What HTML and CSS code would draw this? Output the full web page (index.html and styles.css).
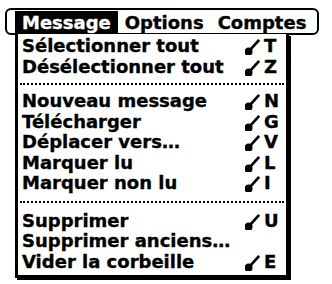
FILE: index.html
```html
<!DOCTYPE html>
<html>
<head>
<meta charset="utf-8">
<link rel="stylesheet" href="styles.css">
</head>
<body>
<div class="screen">
  <div class="menubar">
    <span class="title active">Message</span>
    <span class="title">Options</span>
    <span class="title">Comptes</span>
  </div>
  <div class="dropdown">
    <div class="group">
      <div class="item"><span class="label">Sélectionner tout</span><span class="sc"><svg class="cmd" viewBox="0 0 14 16"><path d="M3 13 L12.5 2.5"/><circle cx="3" cy="13" r="2.4"/></svg><span class="key">T</span></span></div>
      <div class="item"><span class="label">Désélectionner tout</span><span class="sc"><svg class="cmd" viewBox="0 0 14 16"><path d="M3 13 L12.5 2.5"/><circle cx="3" cy="13" r="2.4"/></svg><span class="key">Z</span></span></div>
    </div>
    <div class="sep"></div>
    <div class="group">
      <div class="item"><span class="label">Nouveau message</span><span class="sc"><svg class="cmd" viewBox="0 0 14 16"><path d="M3 13 L12.5 2.5"/><circle cx="3" cy="13" r="2.4"/></svg><span class="key">N</span></span></div>
      <div class="item"><span class="label">Télécharger</span><span class="sc"><svg class="cmd" viewBox="0 0 14 16"><path d="M3 13 L12.5 2.5"/><circle cx="3" cy="13" r="2.4"/></svg><span class="key">G</span></span></div>
      <div class="item"><span class="label">Déplacer vers…</span><span class="sc"><svg class="cmd" viewBox="0 0 14 16"><path d="M3 13 L12.5 2.5"/><circle cx="3" cy="13" r="2.4"/></svg><span class="key">V</span></span></div>
      <div class="item"><span class="label">Marquer lu</span><span class="sc"><svg class="cmd" viewBox="0 0 14 16"><path d="M3 13 L12.5 2.5"/><circle cx="3" cy="13" r="2.4"/></svg><span class="key">L</span></span></div>
      <div class="item"><span class="label">Marquer non lu</span><span class="sc"><svg class="cmd" viewBox="0 0 14 16"><path d="M3 13 L12.5 2.5"/><circle cx="3" cy="13" r="2.4"/></svg><span class="key">I</span></span></div>
    </div>
    <div class="sep sep2"></div>
    <div class="group">
      <div class="item"><span class="label">Supprimer</span><span class="sc"><svg class="cmd" viewBox="0 0 14 16"><path d="M3 13 L12.5 2.5"/><circle cx="3" cy="13" r="2.4"/></svg><span class="key">U</span></span></div>
      <div class="item"><span class="label">Supprimer anciens…</span></div>
      <div class="item"><span class="label">Vider la corbeille</span><span class="sc"><svg class="cmd" viewBox="0 0 14 16"><path d="M3 13 L12.5 2.5"/><circle cx="3" cy="13" r="2.4"/></svg><span class="key">E</span></span></div>
    </div>
  </div>
</div>
</body>
</html>
```

FILE: styles.css
```css
html, body {
  margin: 0;
  padding: 0;
  background: #fff;
}
.screen {
  width: 332px;
  height: 284px;
  position: relative;
  font-family: "DejaVu Sans", sans-serif;
  font-weight: bold;
  color: #000;
  -webkit-text-stroke: 0.35px #000;
}
.menubar {
  position: absolute;
  left: 5px;
  top: 8px;
  width: 302px;
  height: 22px;
  border: 2px solid #000;
  border-radius: 6px;
  padding: 1px 0 0 8px;
  display: flex;
  align-items: stretch;
  font-size: 18px;
}
.title {
  display: flex;
  align-items: center;
  padding: 0 7px 0 7px;
}
.title.active {
  background: #000;
  color: #fff;
  -webkit-text-stroke: 0.35px #fff;
}
.dropdown {
  position: absolute;
  left: 15px;
  top: 34px;
  width: 268px;
  height: 239px;
  border-left: 3px solid #000;
  border-right: 3px solid #000;
  border-bottom: 3px solid #000;
  box-shadow: 2px 2px 0 #000;
  background: #fff;
  padding: 2px 0 0 0;
  font-size: 18px;
}
.item {
  display: flex;
  align-items: center;
  height: 20.5px;
  padding-left: 4px;
  padding-right: 5px;
  line-height: 20px;
}
.label {
  flex: 1;
  white-space: nowrap;
}
.sc {
  display: flex;
  align-items: center;
  width: 36px;
}
.cmd {
  width: 16px;
  height: 18px;
  fill: #000;
  stroke: #000;
  stroke-width: 2.4;
  margin-right: 3px;
}
.sep {
  height: 0;
  margin: 6px 2px 6px 2px;
  border-top: 2px dotted #000;
}
.sep2 {
  margin: 7px 2px 8px 2px;
}
```
